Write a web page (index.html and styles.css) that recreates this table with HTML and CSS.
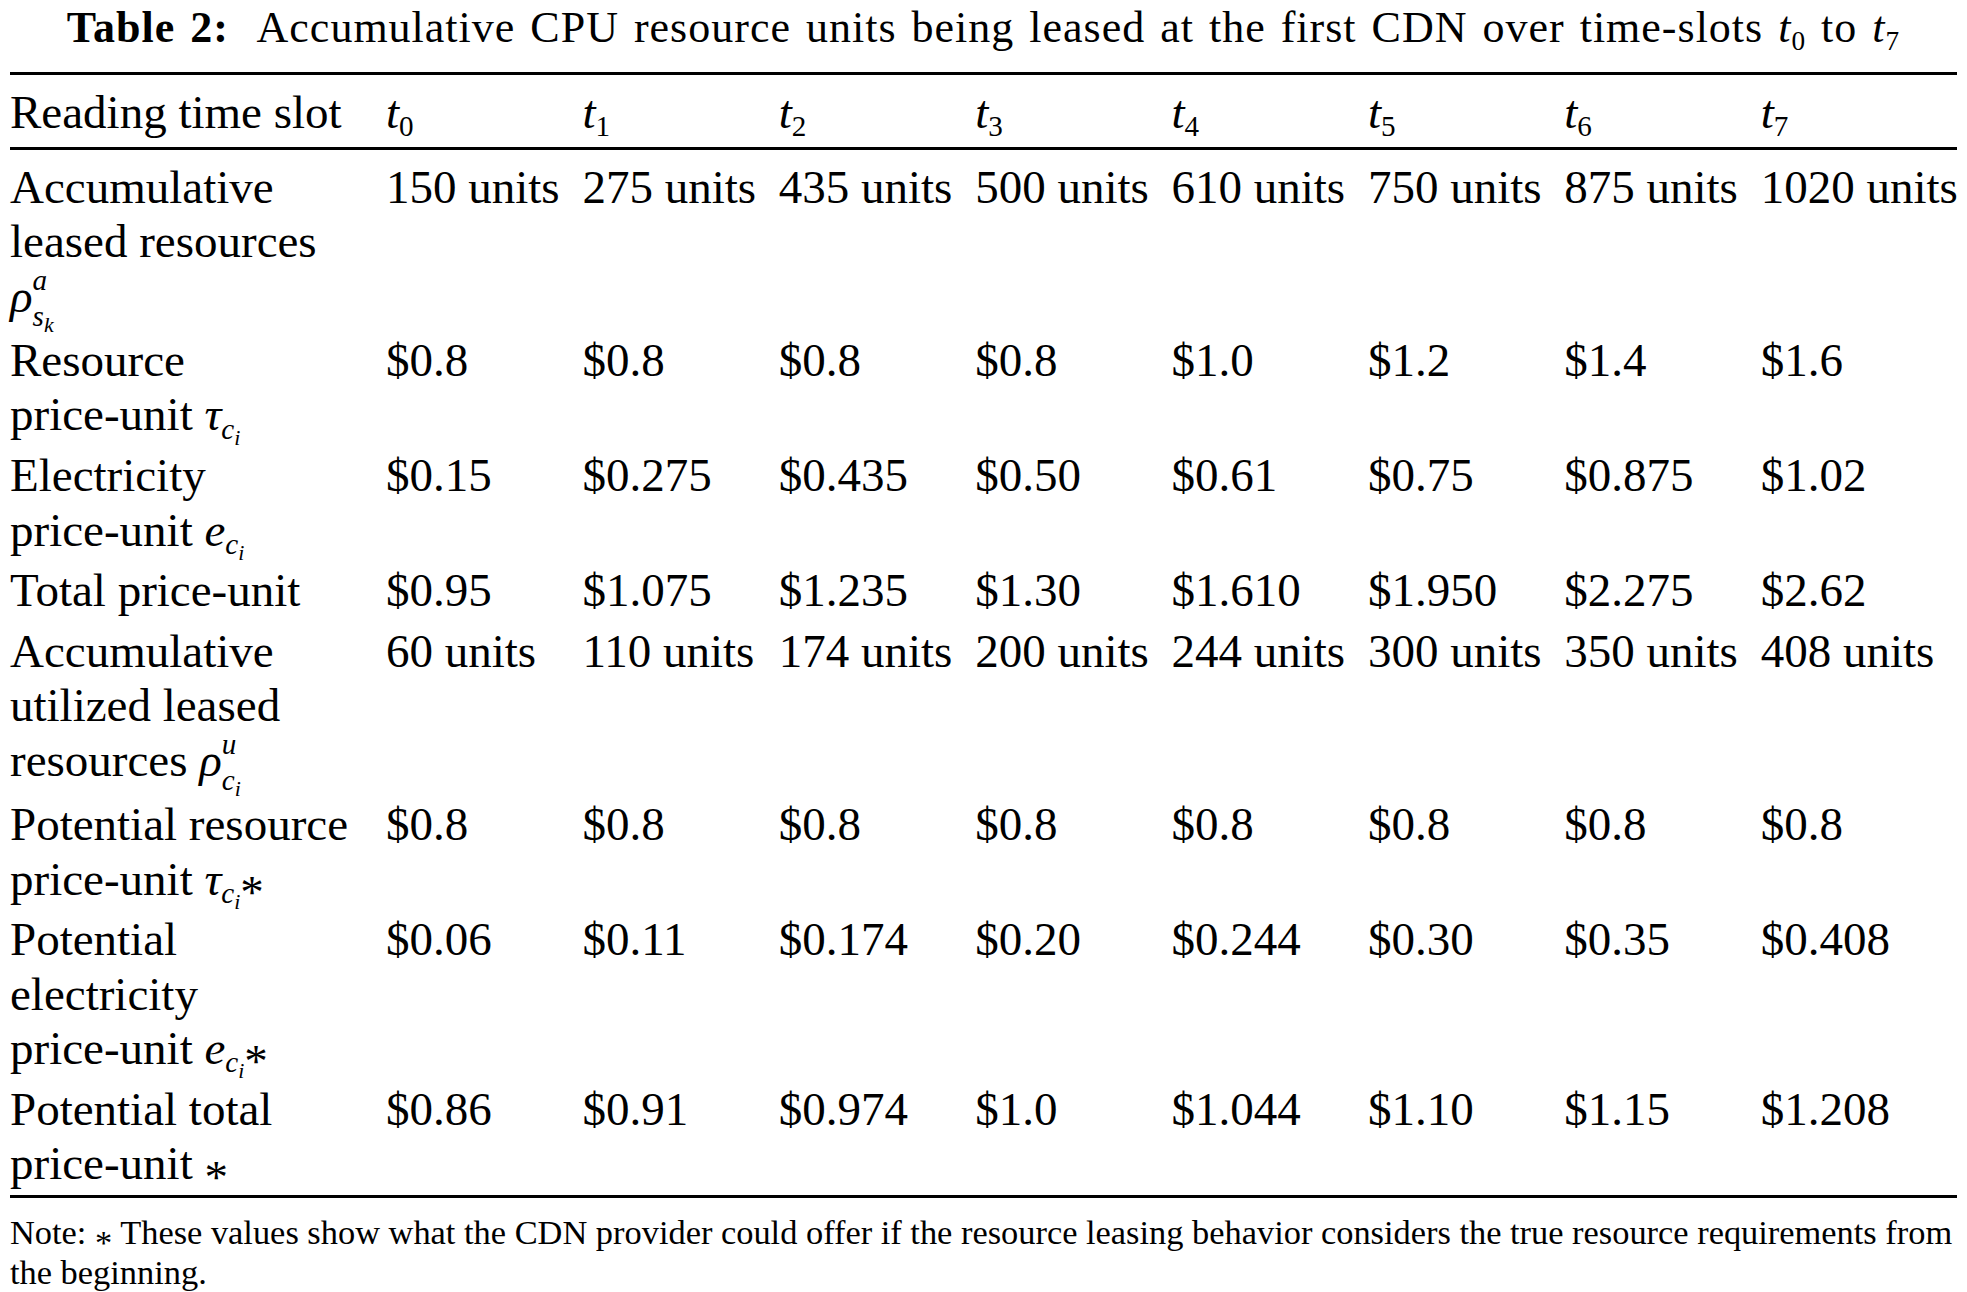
FILE: index.html
```html
<!DOCTYPE html>
<html lang="en">
<head>
<meta charset="utf-8">
<title>Table 2</title>
<link rel="stylesheet" href="styles.css">
</head>
<body>
<div class="page">
  <h1 class="caption"><b>Table 2:</b>&nbsp; Accumulative CPU resource units being leased at the first CDN over time-slots <i>t</i><sub class="ts">0</sub> to <i>t</i><sub class="ts">7</sub></h1>
  <table class="data">
    <colgroup>
      <col class="c-label">
      <col class="c-val"><col class="c-val"><col class="c-val"><col class="c-val">
      <col class="c-val"><col class="c-val"><col class="c-val"><col class="c-val">
    </colgroup>
    <thead>
      <tr>
        <th>Reading time slot</th>
        <th><i>t</i><sub class="ts">0</sub></th>
        <th><i>t</i><sub class="ts">1</sub></th>
        <th><i>t</i><sub class="ts">2</sub></th>
        <th><i>t</i><sub class="ts">3</sub></th>
        <th><i>t</i><sub class="ts">4</sub></th>
        <th><i>t</i><sub class="ts">5</sub></th>
        <th><i>t</i><sub class="ts">6</sub></th>
        <th><i>t</i><sub class="ts">7</sub></th>
      </tr>
    </thead>
    <tbody>
      <tr>
        <td>Accumulative<br>leased resources<br><i>ρ</i><span class="ss"><span class="up"><i>a</i></span><span class="dn"><i>s</i><sub class="s2"><i>k</i></sub></span></span></td>
        <td>150 units</td><td>275 units</td><td>435 units</td><td>500 units</td>
        <td>610 units</td><td>750 units</td><td>875 units</td><td>1020 units</td>
      </tr>
      <tr>
        <td>Resource<br>price-unit <i>τ</i><sub class="s1"><i>c</i><sub class="s2"><i>i</i></sub></sub></td>
        <td>$0.8</td><td>$0.8</td><td>$0.8</td><td>$0.8</td>
        <td>$1.0</td><td>$1.2</td><td>$1.4</td><td>$1.6</td>
      </tr>
      <tr>
        <td>Electricity<br>price-unit <i>e</i><sub class="s1"><i>c</i><sub class="s2"><i>i</i></sub></sub></td>
        <td>$0.15</td><td>$0.275</td><td>$0.435</td><td>$0.50</td>
        <td>$0.61</td><td>$0.75</td><td>$0.875</td><td>$1.02</td>
      </tr>
      <tr>
        <td>Total price-unit</td>
        <td>$0.95</td><td>$1.075</td><td>$1.235</td><td>$1.30</td>
        <td>$1.610</td><td>$1.950</td><td>$2.275</td><td>$2.62</td>
      </tr>
      <tr>
        <td>Accumulative<br>utilized leased<br>resources <i>ρ</i><span class="ss"><span class="up"><i>u</i></span><span class="dn"><i>c</i><sub class="s2"><i>i</i></sub></span></span></td>
        <td>60 units</td><td>110 units</td><td>174 units</td><td>200 units</td>
        <td>244 units</td><td>300 units</td><td>350 units</td><td>408 units</td>
      </tr>
      <tr>
        <td>Potential resource<br>price-unit <i>τ</i><sub class="s1"><i>c</i><sub class="s2"><i>i</i></sub></sub><span class="ast">*</span></td>
        <td>$0.8</td><td>$0.8</td><td>$0.8</td><td>$0.8</td>
        <td>$0.8</td><td>$0.8</td><td>$0.8</td><td>$0.8</td>
      </tr>
      <tr>
        <td>Potential<br>electricity<br>price-unit <i>e</i><sub class="s1"><i>c</i><sub class="s2"><i>i</i></sub></sub><span class="ast">*</span></td>
        <td>$0.06</td><td>$0.11</td><td>$0.174</td><td>$0.20</td>
        <td>$0.244</td><td>$0.30</td><td>$0.35</td><td>$0.408</td>
      </tr>
      <tr>
        <td>Potential total<br>price-unit <span class="ast">*</span></td>
        <td>$0.86</td><td>$0.91</td><td>$0.974</td><td>$1.0</td>
        <td>$1.044</td><td>$1.10</td><td>$1.15</td><td>$1.208</td>
      </tr>
    </tbody>
  </table>
  <p class="note">Note: <span class="ast">*</span> These values show what the CDN provider could offer if the resource leasing behavior considers the true resource requirements from<br>the beginning.</p>
</div>
</body>
</html>
```
FILE: styles.css
```css
html, body {
  margin: 0;
  padding: 0;
  background: #ffffff;
  color: #000000;
  font-family: "Liberation Serif", "Times New Roman", serif;
}

.page {
  width: 1947px;
  padding: 0 10px;
}

.caption {
  margin: 0;
  padding-top: 5px;
  font-size: 44px;
  line-height: 46px;
  letter-spacing: 1px;
  word-spacing: 3px;
  font-weight: normal;
  text-align: center;
  white-space: nowrap;
}

.caption b {
  font-weight: bold;
}

.ts {
  font-size: 0.62em;
  vertical-align: -0.28em;
  line-height: 0;
}

.data {
  margin-top: 21px;
  width: 1947px;
  border-collapse: collapse;
  table-layout: fixed;
  font-size: 47px;
  line-height: 54.6px;
}

.c-label {
  width: 376px;
}

.c-val {
  width: 196.375px;
}

.data th,
.data td {
  text-align: left;
  vertical-align: top;
  font-weight: normal;
  padding: 3px 0;
  white-space: nowrap;
}

.data thead tr {
  border-top: 3px solid #000;
  border-bottom: 3px solid #000;
}

.data thead th {
  padding: 10px 0 7px;
}

.data tbody tr:first-child td {
  padding-top: 10px;
}

.data tbody tr:last-child {
  border-bottom: 3px solid #000;
}

.data tbody tr:last-child td {
  padding-bottom: 4px;
}

.s1 {
  font-size: 0.62em;
  vertical-align: -0.28em;
  line-height: 0;
}

.s2 {
  font-size: 0.75em;
  vertical-align: -0.28em;
  line-height: 0;
}

.ss {
  display: inline-block;
  font-size: 0.62em;
  line-height: 1.25;
  vertical-align: -0.5em;
  margin: -9px 0 -8px;
}

.ss .up,
.ss .dn {
  display: block;
}

.ast {
  display: inline-block;
  line-height: 0;
  vertical-align: -0.28em;
}

.note {
  margin: 14px 0 0;
  font-size: 34.4px;
  line-height: 40px;
  white-space: nowrap;
}
```
